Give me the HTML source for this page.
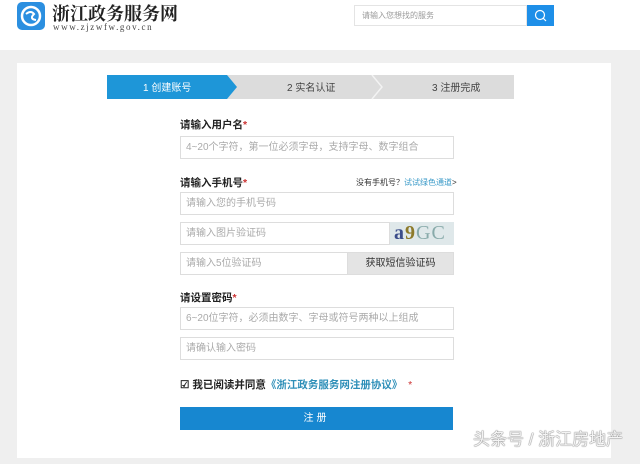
<!DOCTYPE html><html><head><meta charset="utf-8"><style>
*{margin:0;padding:0;box-sizing:border-box}
body{width:640px;height:464px;background:#efefef;font-family:"Liberation Sans","Noto Sans CJK SC",sans-serif;position:relative;overflow:hidden;font-size:10px;color:#333}
.hdr{position:absolute;left:0;top:0;width:640px;height:50px;background:#fff}
.abs{position:absolute}
.panel{position:absolute;left:17px;top:63px;width:594px;height:395px;background:#fff}
.inp{position:absolute;left:180px;width:274px;height:23px;border:1px solid #ddd;background:#fff;color:#aaa;font-size:10px;line-height:22px;padding-left:5px}
.lbl{position:absolute;left:180px;font-size:10.5px;font-weight:bold;color:#222}
.lbl i{color:#c33;font-style:normal}
</style></head><body>
<div class="hdr">
<div class="abs" style="left:17px;top:2px;width:28px;height:28px;background:#2b8fe0;border-radius:5px"><svg width="28" height="28"><circle cx="14" cy="14" r="9" fill="none" stroke="#fff" stroke-width="2.5"/><path d="M9 12 Q14 8 17 12 Q12 17 19 18" fill="none" stroke="#fff" stroke-width="2"/></svg></div>
<div class="abs" style="left:52px;top:2px;font-family:'Noto Serif CJK SC',serif;font-weight:bold;font-size:18px;color:#222;line-height:22px">浙江政务服务网</div>
<div class="abs" style="left:53px;top:22px;font-family:'Liberation Serif',serif;font-size:9px;letter-spacing:1.6px;color:#444">www.zjzwfw.gov.cn</div>
<div class="abs" style="left:354px;top:5px;width:173px;height:21px;border:1px solid #e4e4e4;font-size:8px;color:#999;line-height:19px;padding-left:7px">请输入您想找的服务</div>
<div class="abs" style="left:527px;top:5px;width:27px;height:21px;background:#1e8fe8"><svg width="27" height="21"><circle cx="13" cy="10" r="4.5" fill="none" stroke="#fff" stroke-width="1.2"/><path d="M16 13 L19 16" stroke="#fff" stroke-width="1.2"/></svg></div>
</div>
<div class="panel"></div>
<svg class="abs" style="left:107px;top:75px" width="407" height="25">
<rect x="0" y="0" width="407" height="24" fill="#dcdcdc"/>
<polygon points="0,0 120,0 130,12 120,24 0,24" fill="#1e96d8"/>
<polyline points="265,0 275,12 265,24" fill="none" stroke="#f3f3f3" stroke-width="1.5"/>
<text x="36" y="16" font-size="10" fill="#fff" font-family="Liberation Sans,Noto Sans CJK SC,sans-serif">1 创建账号</text>
<text x="180" y="16" font-size="10" fill="#444" font-family="Liberation Sans,Noto Sans CJK SC,sans-serif">2 实名认证</text>
<text x="325" y="16" font-size="10" fill="#444" font-family="Liberation Sans,Noto Sans CJK SC,sans-serif">3 注册完成</text>
</svg>
<div class="lbl" style="top:117px">请输入用户名<i>*</i></div>
<div class="inp" style="top:136px">4~20个字符，第一位必须字母，支持字母、数字组合</div>
<div class="lbl" style="top:175px">请输入手机号<i>*</i></div>
<div class="abs" style="left:356px;top:177px;font-size:8px;color:#333">没有手机号？<span style="color:#3a9ac8">试试绿色通道</span>&gt;</div>
<div class="inp" style="top:192px">请输入您的手机号码</div>
<div class="inp" style="top:222px;width:210px">请输入图片验证码</div>
<div class="abs" style="left:390px;top:222px;width:64px;height:23px;background:#dfe8ea;font-family:'Liberation Serif',serif;font-size:20px;line-height:23px;color:#3b4d8a;font-weight:bold;padding-left:4px;letter-spacing:1px">a<span style="color:#8d7a2a">9</span><span style="color:#8aa;font-weight:normal">GC</span></div>
<div class="inp" style="top:252px;width:168px">请输入5位验证码</div>
<div class="abs" style="left:347px;top:252px;width:107px;height:23px;background:#e4e4e4;border:1px solid #ddd;font-size:10px;line-height:21px;text-align:center;color:#333">获取短信验证码</div>
<div class="lbl" style="top:290px">请设置密码<i>*</i></div>
<div class="inp" style="top:307px">6~20位字符，必须由数字、字母或符号两种以上组成</div>
<div class="inp" style="top:337px">请确认输入密码</div>
<div class="abs" style="left:180px;top:377px;font-size:10.5px;font-weight:bold;color:#222">☑ 我已阅读并同意<span style="color:#2e8fb8">《浙江政务服务网注册协议》</span> <span style="color:#c33;font-weight:normal">&nbsp;*</span></div>
<div class="abs" style="left:180px;top:407px;width:273px;height:23px;background:#1787d0;color:#fff;font-size:10px;line-height:23px;text-align:center;letter-spacing:3px">注册</div>
<div class="abs" style="left:473px;top:425px;font-size:17px;color:#f4f4f4;text-shadow:0 0 1px #666,0 0 1px #666">头条号 / 浙江房地产</div>
</body></html>
